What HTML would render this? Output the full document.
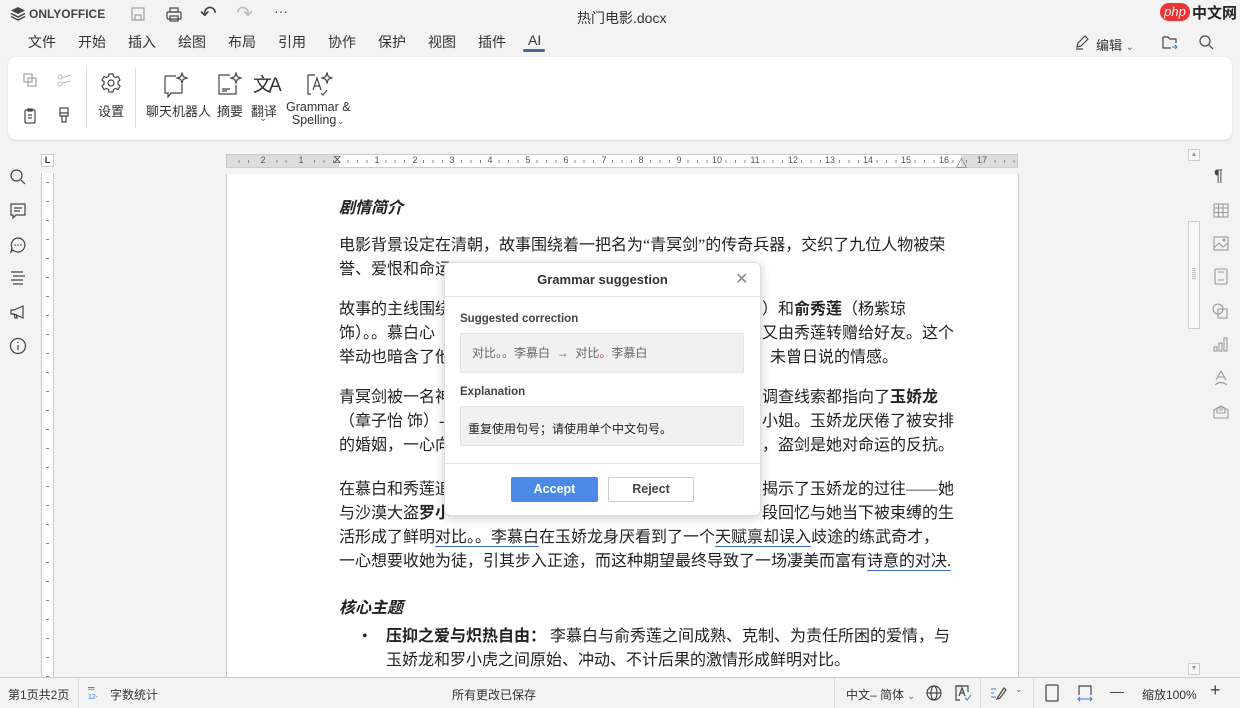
<!DOCTYPE html>
<html><head><meta charset="utf-8">
<style>
*{box-sizing:border-box;margin:0;padding:0}
body{width:1240px;height:708px;overflow:hidden;background:#f3f3f3;font-family:"Liberation Sans","Noto Sans CJK SC",sans-serif;color:#333;position:relative}
.a{position:absolute}
.t{font-size:13px;color:#333;white-space:nowrap}
.ic{stroke:#444;fill:none;stroke-width:1.2}
.doc{font-family:"Liberation Serif","Noto Sans CJK SC",sans-serif;font-size:16px;color:#222;white-space:nowrap;line-height:24px}
.gi{stroke:#999;fill:none;stroke-width:1.1}
.rn{position:absolute;top:155px;font-size:9px;color:#555;width:16px;margin-left:-8px;text-align:center;background:inherit}
</style></head><body>
<!-- title bar -->
<svg class="a" style="left:10px;top:6px" width="16" height="16" viewBox="0 0 16 16"><path d="M8 1L15 4.5 8 8 1 4.5Z" fill="#444"/><path d="M1 7.5L8 11 15 7.5M1 10.5L8 14 15 10.5" stroke="#444" stroke-width="1.5" fill="none"/></svg>
<div class="a" style="left:29px;top:7px;font-size:12px;font-weight:bold;color:#444">ONLYOFFICE</div>
<svg class="a" style="left:130px;top:6px" width="16" height="16"><rect x="2" y="2" width="12" height="12" class="gi" stroke="#aaa"/><rect x="5" y="9" width="6" height="5" class="gi"/></svg>
<svg class="a" style="left:165px;top:6px" width="18" height="16"><rect x="2" y="6" width="14" height="7" rx="1" class="ic"/><rect x="5" y="2" width="8" height="4" class="ic"/><rect x="5" y="10" width="8" height="5" class="ic"/></svg>
<div class="a" style="left:200px;top:1px;font-size:20px;color:#444">↶</div>
<div class="a" style="left:236px;top:1px;font-size:20px;color:#bbb">↷</div>
<div class="a" style="left:274px;top:3px;font-size:14px;color:#444">···</div>
<div class="a t" style="left:577px;top:8px;font-size:14px">热门电影.docx</div>
<div class="a" style="left:1160px;top:3px;width:30px;height:18px;border-radius:9px;background:#e33;color:#fff;font-size:13px;font-style:italic;text-align:center;line-height:18px">php</div>
<div class="a" style="left:1192px;top:2px;font-size:15px;font-weight:bold;color:#222">中文网</div>
<!-- menu -->
<div class="a t" style="left:28px;top:32px;font-size:14px">文件</div>
<div class="a t" style="left:78px;top:32px;font-size:14px">开始</div>
<div class="a t" style="left:128px;top:32px;font-size:14px">插入</div>
<div class="a t" style="left:178px;top:32px;font-size:14px">绘图</div>
<div class="a t" style="left:228px;top:32px;font-size:14px">布局</div>
<div class="a t" style="left:278px;top:32px;font-size:14px">引用</div>
<div class="a t" style="left:328px;top:32px;font-size:14px">协作</div>
<div class="a t" style="left:378px;top:32px;font-size:14px">保护</div>
<div class="a t" style="left:428px;top:32px;font-size:14px">视图</div>
<div class="a t" style="left:478px;top:32px;font-size:14px">插件</div>
<div class="a t" style="left:528px;top:32px;font-size:14px">AI</div>
<div class="a" style="left:523px;top:49px;width:22px;height:3px;background:#446995;border-radius:2px"></div>
<svg class="a" style="left:1074px;top:34px" width="16" height="16"><path d="M3 13L4 9 11 2 14 5 7 12Z M2 15H9" class="ic"/></svg>
<div class="a t" style="left:1096px;top:35px">编辑 <span style="font-size:10px;color:#666">⌄</span></div>
<svg class="a" style="left:1161px;top:33px" width="18" height="18"><path d="M2 4H7L9 6H15V10M2 4V15H10" class="ic"/><path d="M11 14H16M14 12L16 14 14 16" stroke="#3a78d4" fill="none"/></svg>
<svg class="a" style="left:1198px;top:34px" width="16" height="16"><circle cx="7" cy="7" r="5" class="ic"/><path d="M11 11L15 15" class="ic"/></svg>
<!-- toolbar panel -->
<div class="a" style="left:8px;top:57px;width:1224px;height:83px;background:#fff;border-radius:8px;box-shadow:0 1px 2px rgba(0,0,0,.12)"></div>
<svg class="a" style="left:22px;top:72px" width="16" height="16"><rect x="2" y="2" width="8" height="8" class="gi" stroke="#bbb"/><rect x="6" y="6" width="8" height="8" fill="#fff" class="gi" stroke="#bbb"/></svg>
<svg class="a" style="left:56px;top:72px" width="16" height="16"><circle cx="4" cy="5" r="2" stroke="#bbb" fill="none"/><circle cx="4" cy="12" r="2" stroke="#bbb" fill="none"/><path d="M6 6L15 3M6 11L15 9" stroke="#bbb"/></svg>
<svg class="a" style="left:22px;top:107px" width="16" height="18"><rect x="3" y="3" width="10" height="13" rx="1" class="ic"/><path d="M6 2H10V4H6ZM6 8H10M6 11H10" class="ic"/></svg>
<svg class="a" style="left:56px;top:106px" width="16" height="18"><path d="M4 2H12V10H4ZM4 7H12M6 10V16H10V10" class="ic"/></svg>
<div class="a" style="left:86px;top:68px;width:1px;height:60px;background:#ddd"></div>
<svg class="a" style="left:100px;top:72px" width="22" height="22" viewBox="0 0 22 22"><circle cx="11" cy="11" r="3" class="ic"/><path d="M9 2H13L13.5 4.5 15.5 5.5 18 4.5 20 8 18 9.8V12.2L20 14 18 17.5 15.5 16.5 13.5 17.5 13 20H9L8.5 17.5 6.5 16.5 4 17.5 2 14 4 12.2V9.8L2 8 4 4.5 6.5 5.5 8.5 4.5Z" class="ic"/></svg>
<div class="a t" style="left:98px;top:101px">设置</div>
<div class="a" style="left:135px;top:68px;width:1px;height:60px;background:#ddd"></div>
<svg class="a" style="left:162px;top:72px" width="28" height="26"><path d="M3 4H14M3 4V21H6V25L9 21H20V12" class="ic"/><path d="M20 1L21.3 4.7 25 6 21.3 7.3 20 11 18.7 7.3 15 6 18.7 4.7Z" class="ic"/></svg>
<div class="a t" style="left:146px;top:101px">聊天机器人</div>
<svg class="a" style="left:216px;top:72px" width="28" height="26"><path d="M14 3H3V22H20V13M6 17H14M6 19H11" class="ic"/><path d="M20 1L21.3 4.7 25 6 21.3 7.3 20 11 18.7 7.3 15 6 18.7 4.7Z" class="ic"/></svg>
<div class="a t" style="left:217px;top:101px">摘要</div>
<div class="a" style="left:253px;top:70px;font-size:19px;color:#333;letter-spacing:-3px">文A</div>
<div class="a t" style="left:251px;top:101px">翻译</div>
<div class="a" style="left:259px;top:113px;font-size:10px;color:#666">⌄</div>
<svg class="a" style="left:305px;top:72px" width="28" height="26"><path d="M10 3H3V22H6" class="ic"/><path d="M8 18L12 6 16 18M9.5 14H14.5M16 21L18 23 22 18" class="ic"/><path d="M22 1L23.3 4.7 27 6 23.3 7.3 22 11 20.7 7.3 17 6 20.7 4.7Z" class="ic"/></svg>
<div class="a t" style="left:286px;top:101px;font-size:12.5px;line-height:13px;text-align:center">Grammar &amp;<br>Spelling<span style="font-size:10px;color:#666">⌄</span></div>
<!-- left sidebar -->
<svg class="a" style="left:9px;top:168px" width="18" height="18"><circle cx="7.5" cy="7.5" r="5.5" class="ic"/><path d="M12 12L16 16" class="ic"/></svg>
<svg class="a" style="left:9px;top:202px" width="18" height="18"><path d="M2 2H16V13H7L4 16V13H2Z M5 6H13M5 9H11" class="ic"/></svg>
<svg class="a" style="left:9px;top:236px" width="18" height="18"><path d="M9 2A7 7 0 1 1 4 14L2 16 3 12A7 7 0 0 1 9 2Z" class="ic"/><circle cx="6" cy="9" r=".8" fill="#444"/><circle cx="9" cy="9" r=".8" fill="#444"/><circle cx="12" cy="9" r=".8" fill="#444"/></svg>
<svg class="a" style="left:9px;top:269px" width="18" height="18"><path d="M2 3H14M4 7H16M2 11H14M4 15H14" class="ic"/></svg>
<svg class="a" style="left:9px;top:303px" width="18" height="18"><path d="M2 7V11H5L14 15V3L5 7Z M5 11L6 15H8L7 11" class="ic"/></svg>
<svg class="a" style="left:9px;top:337px" width="18" height="18"><circle cx="9" cy="9" r="7.5" class="ic"/><path d="M9 8V13M9 5V6" class="ic"/></svg>
<!-- vertical ruler -->
<div class="a" style="left:41px;top:154px;width:13px;height:13px;border:1px solid #ccc;background:#fff;font-size:9px;font-weight:bold;text-align:center;line-height:11px">L</div>
<div class="a" style="left:41px;top:173px;width:13px;height:504px;background:#fff;border-left:1px solid #ccc;border-right:1px solid #ccc;background-image:repeating-linear-gradient(#fff 0 9px,#888 9px 10px,#fff 10px 19px);background-size:3px 19px;background-position:4px 0;background-repeat:repeat-y"></div>
<!-- horizontal ruler -->
<div class="a" style="left:226px;top:154px;width:792px;height:14px;background:#ddd;border:1px solid #ccc;background-image:repeating-linear-gradient(90deg,transparent 0 8.45px,#888 8.45px 9.45px);background-size:100% 3px;background-position:3px 5px;background-repeat:no-repeat"></div>
<div class="a" style="left:339px;top:154px;width:622px;height:14px;background:#fff;border-top:1px solid #ccc;border-bottom:1px solid #ccc;background-image:repeating-linear-gradient(90deg,transparent 0 8.45px,#888 8.45px 9.45px);background-size:100% 3px;background-position:0 5px;background-repeat:no-repeat"></div>
<div style="background:#ddd"><span class="rn" style="left:263px">2</span><span class="rn" style="left:301px">1</span></div>
<div style="background:#fff">
<span class="rn" style="left:377px">1</span><span class="rn" style="left:415px">2</span><span class="rn" style="left:452px">3</span><span class="rn" style="left:490px">4</span><span class="rn" style="left:528px">5</span><span class="rn" style="left:566px">6</span><span class="rn" style="left:604px">7</span><span class="rn" style="left:641px">8</span><span class="rn" style="left:679px">9</span><span class="rn" style="left:717px">10</span><span class="rn" style="left:755px">11</span><span class="rn" style="left:793px">12</span><span class="rn" style="left:830px">13</span><span class="rn" style="left:868px">14</span><span class="rn" style="left:906px">15</span><span class="rn" style="left:944px">16</span></div>
<div style="background:#ddd"><span class="rn" style="left:982px">17</span></div>
<div class="a" style="left:333px;top:152px;font-size:12px;color:#444">⧖</div>
<div class="a" style="left:956px;top:155px;font-size:11px;color:#444">△</div>
<!-- page -->
<div class="a" style="left:226px;top:174px;width:793px;height:503px;background:#fff;border-left:1px solid #ccc;border-right:1px solid #ccc"></div>
<div class="a doc" style="left:339px;top:197px;font-weight:bold;font-style:italic">剧情简介</div>
<div class="a doc" style="left:339px;top:234px">电影背景设定在清朝，故事围绕着一把名为“青冥剑”的传奇兵器，交织了九位人物被荣<br>誉、爱恨和命运</div>
<div class="a doc" style="left:339px;top:298px">故事的主线围绕<br>饰）。。慕白心<br>举动也暗含了他</div>
<div class="a doc" style="left:762px;top:298px">）和<b>俞秀莲</b>（杨紫琼<br>又由秀莲转赠给好友。这个<br>&nbsp;&nbsp;未曾日说的情感。</div>
<div class="a doc" style="left:339px;top:386px">青冥剑被一名神<br>（章子怡 饰）-<br>的婚姻，一心向</div>
<div class="a doc" style="left:762px;top:386px">调查线索都指向了<b>玉娇龙</b><br>小姐。玉娇龙厌倦了被安排<br>，盗剑是她对命运的反抗。</div>
<div class="a doc" style="left:339px;top:478px">在慕白和秀莲追<br>与沙漠大盗<b>罗小</b></div>
<div class="a doc" style="left:762px;top:478px">揭示了玉娇龙的过往——她<br>段回忆与她当下被束缚的生</div>
<div class="a doc" style="left:339px;top:526px">活形成了鲜明<span style="border-bottom:1px solid #3a6fd8">对比。。李慕白</span>在玉娇龙身厌看到了一个<span style="border-bottom:1px solid #3a6fd8">天赋禀却误入</span>歧途的练武奇才，<br>一心想要收她为徒，引其步入正途，而这种期望最终导致了一场凄美而富有<span style="border-bottom:1px solid #3a6fd8">诗意的对决.</span></div>
<div class="a doc" style="left:339px;top:597px;font-weight:bold;font-style:italic">核心主题</div>
<div class="a doc" style="left:362px;top:625px">•</div>
<div class="a doc" style="left:386px;top:625px"><b>压抑之爱与炽热自由：</b> 李慕白与俞秀莲之间成熟、克制、为责任所困的爱情，与<br>玉娇龙和罗小虎之间原始、冲动、不计后果的激情形成鲜明对比。</div>
<!-- dialog -->
<div class="a" style="left:444px;top:262px;width:317px;height:254px;background:#fff;border-radius:6px;box-shadow:0 2px 10px rgba(0,0,0,.2);border:1px solid #ddd">
 <div class="a" style="left:0;top:0;width:315px;height:34px;border-bottom:1px solid #e4e4e4;text-align:center;line-height:34px;font-size:13px;font-weight:bold;color:#333">Grammar suggestion</div>
 <div class="a" style="left:290px;top:6px;font-size:16px;color:#888">✕</div>
 <div class="a t" style="left:15px;top:50px;font-size:11.5px;font-weight:bold;color:#444">Suggested correction</div>
 <div class="a" style="left:15px;top:70px;width:284px;height:40px;background:#f1f1f1;border:1px solid #e4e4e4;border-radius:2px;font-size:12px;color:#666;line-height:38px;padding-left:11px;white-space:nowrap">对比。。李慕白 &nbsp;→ &nbsp;对比<span style="color:#e33">。</span>李慕白</div>
 <div class="a t" style="left:15px;top:123px;font-size:11.5px;font-weight:bold;color:#444">Explanation</div>
 <div class="a" style="left:15px;top:143px;width:284px;height:40px;background:#f1f1f1;border:1px solid #e4e4e4;border-radius:2px;font-size:12px;color:#222;line-height:44px;padding-left:7px;white-space:nowrap">重复使用句号；请使用单个中文句号。</div>
 <div class="a" style="left:0;top:200px;width:315px;height:1px;background:#e4e4e4"></div>
 <div class="a" style="left:66px;top:214px;width:87px;height:25px;background:#4a8ae6;border-radius:2px;color:#fff;font-size:12.5px;font-weight:bold;text-align:center;line-height:25px">Accept</div>
 <div class="a" style="left:163px;top:214px;width:86px;height:25px;background:#fff;border:1px solid #ccc;border-radius:2px;color:#444;font-size:12.5px;font-weight:bold;text-align:center;line-height:23px">Reject</div>
</div>
<!-- right scrollbar & sidebar -->
<div class="a" style="left:1188px;top:149px;width:12px;height:12px;border:1px solid #ccc;background:#f7f7f7;font-size:7px;color:#999;text-align:center;line-height:10px">▲</div>
<div class="a" style="left:1188px;top:221px;width:12px;height:108px;border:1px solid #ccc;background:#f7f7f7"></div>
<div class="a" style="left:1192px;top:268px;width:4px;height:12px;background:repeating-linear-gradient(#bbb 0 1px,transparent 1px 2px)"></div>
<div class="a" style="left:1188px;top:663px;width:12px;height:12px;border:1px solid #ccc;background:#f7f7f7;font-size:7px;color:#999;text-align:center;line-height:10px">▼</div>
<div class="a" style="left:1214px;top:166px;font-size:17px;color:#444">¶</div>
<svg class="a" style="left:1213px;top:203px" width="16" height="16"><rect x="1" y="1" width="14" height="13" class="gi"/><path d="M1 5H15M1 9.5H15M5.5 1V14M10 1V14" class="gi"/></svg>
<svg class="a" style="left:1213px;top:236px" width="16" height="16"><rect x="1" y="1" width="14" height="13" class="gi"/><path d="M1 12L6 7 10 11 15 7" class="gi"/><circle cx="11" cy="4" r="1" class="gi"/></svg>
<svg class="a" style="left:1213px;top:268px" width="16" height="18"><rect x="2" y="1" width="12" height="15" rx="1" class="gi"/><path d="M5 4H11M5 12H11" class="gi"/></svg>
<svg class="a" style="left:1212px;top:303px" width="18" height="18"><circle cx="6" cy="6" r="5" class="gi"/><rect x="6" y="6" width="9" height="9" fill="#f3f3f3" class="gi"/></svg>
<svg class="a" style="left:1213px;top:337px" width="16" height="16"><rect x="1" y="10" width="3" height="4" class="gi"/><rect x="6" y="6" width="3" height="8" class="gi"/><rect x="11" y="1" width="3" height="13" class="gi"/></svg>
<svg class="a" style="left:1213px;top:370px" width="16" height="16"><path d="M3 10L8 1 13 10M5 7H11M2 15Q8 10 14 15" class="gi"/></svg>
<svg class="a" style="left:1213px;top:403px" width="16" height="16"><path d="M1 7V15H15V7L8 3Z M4 5V10H12V5Z M6 7H10" class="gi"/></svg>
<!-- status bar -->
<div class="a" style="left:0;top:677px;width:1240px;height:31px;background:#f3f3f3;border-top:1px solid #ccc"></div>
<div class="a t" style="left:8px;top:686px;font-size:12px">第1页共2页</div>
<div class="a" style="left:78px;top:678px;width:1px;height:30px;background:#ddd"></div>
<div class="a" style="left:88px;top:684px;font-size:9px;line-height:8px;color:#555">═<br><span style="color:#3a78d4;font-size:7px">12-</span></div>
<div class="a t" style="left:110px;top:686px;font-size:12px">字数统计</div>
<div class="a t" style="left:452px;top:686px;font-size:12px">所有更改已保存</div>
<div class="a" style="left:834px;top:678px;width:1px;height:30px;background:#ddd"></div>
<div class="a t" style="left:846px;top:686px;font-size:12px">中文– 简体 <span style="font-size:9px;color:#666">⌄</span></div>
<svg class="a" style="left:926px;top:685px" width="16" height="16"><circle cx="8" cy="8" r="7" class="ic"/><ellipse cx="8" cy="8" rx="3" ry="7" class="ic"/><path d="M1 8H15" class="ic"/></svg>
<svg class="a" style="left:954px;top:684px" width="18" height="18"><path d="M8 2H2V16H6" class="ic"/><path d="M2 2H14V8" class="ic"/><path d="M5 12L8 4 11 12M6 9H10" class="ic"/><path d="M11 14L13 16 17 11" stroke="#3a78d4" fill="none"/></svg>
<div class="a" style="left:980px;top:678px;width:1px;height:30px;background:#ddd"></div>
<svg class="a" style="left:990px;top:685px" width="18" height="16"><path d="M1 4H6M1 8H4M1 12H6" stroke="#3a78d4"/><path d="M8 12L14 3 16 5 10 13 7 14Z" class="ic"/></svg>
<div class="a" style="left:1015px;top:684px;font-size:9px;color:#666">⌄</div>
<div class="a" style="left:1033px;top:678px;width:1px;height:30px;background:#ddd"></div>
<svg class="a" style="left:1045px;top:684px" width="14" height="18"><rect x="1" y="1" width="12" height="16" rx="1" class="ic"/></svg>
<svg class="a" style="left:1076px;top:684px" width="18" height="18"><path d="M3 11V2H15V11" class="ic"/><path d="M2 15H16M4 13L2 15 4 17M14 13L16 15 14 17" stroke="#3a78d4" fill="none"/></svg>
<div class="a" style="left:1110px;top:692px;width:14px;height:1px;background:#444"></div>
<div class="a t" style="left:1142px;top:686px;font-size:12px">缩放100%</div>
<div class="a" style="left:1210px;top:680px;font-size:18px;color:#444">+</div>
</body></html>
